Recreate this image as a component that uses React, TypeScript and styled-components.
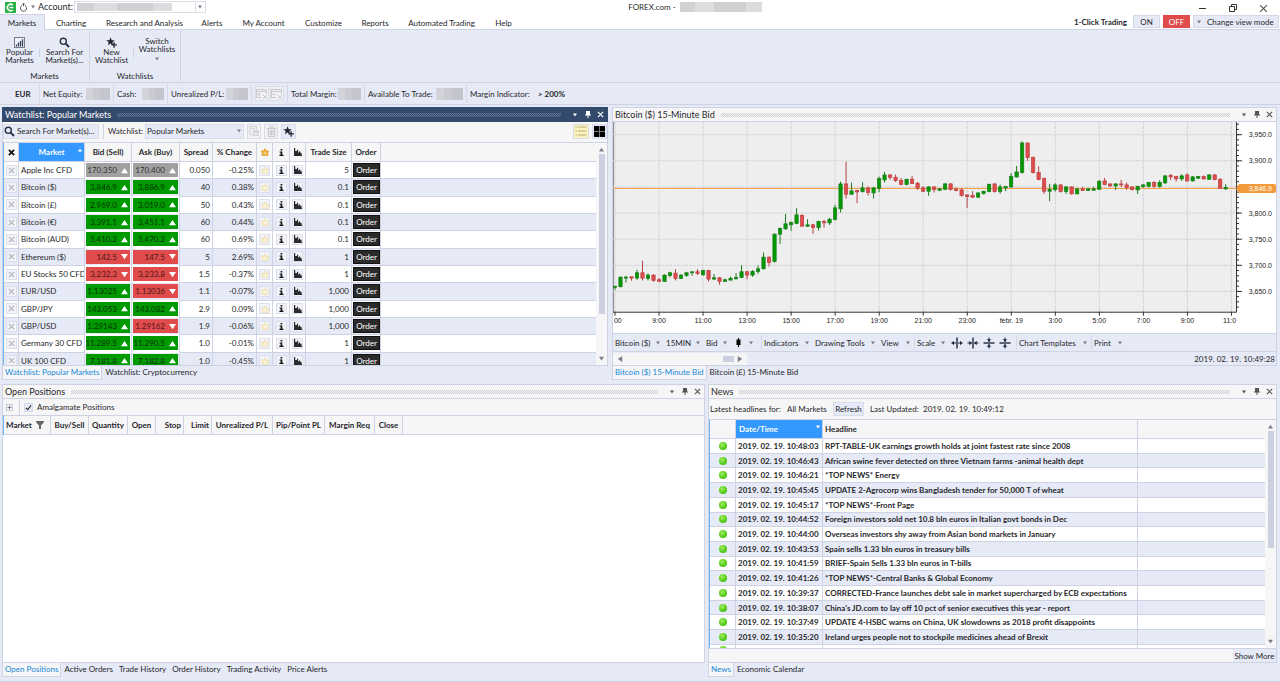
import React from "react";
import styled, { createGlobalStyle, css } from "styled-components";

const c = {
  page: "#e6eaf6",
  line: "#cfd2e2",
  panel: "#f6f6f6",
  ink: "#26272b",
  navy: "#344a6d",
  blue: "#3399ff",
  link: "#1886d9",
  green: "#009a00",
  red: "#e04b4b",
};

const Global = createGlobalStyle`
  *, *::before, *::after { box-sizing: border-box; }
  body { margin: 0; background: ${c.page}; color: ${c.ink}; font: 8px/10px Lato, "Liberation Sans", sans-serif; }
  button, select, input { font: inherit; color: inherit; margin: 0; }
  button { border: 0; padding: 0; background: none; white-space: nowrap; }
  svg { display: block; flex: none; }
`;

const Page = styled.div`
  height: 100vh;
  min-height: 480px;
  display: flex;
  flex-direction: column;
  overflow: hidden;
  white-space: nowrap;
`;

/* ---------- title bar and menu ---------- */
const TitleBar = styled.header`
  display: flex;
  align-items: center;
  height: 14px;
  flex: none;
  background: #fff;
`;
const TitleLeft = styled.div`
  flex: 16 1 0;
  display: flex;
  align-items: center;
  gap: 3px;
  padding-left: 5px;
`;
const TitleText = styled.h1`
  margin: 0;
  font: inherit;
  display: flex;
  align-items: center;
  gap: 4px;
`;
const TitleRight = styled.div`
  flex: 13 1 0;
  display: flex;
  justify-content: flex-end;
  align-items: center;
  gap: 22px;
  padding: 2px 12px 0 0;
`;
const Logo = styled.span`
  display: grid;
  place-items: center;
  width: 11px;
  height: 11px;
  background: #2db34a;
`;
const AccountBox = styled.div`
  display: flex;
  align-items: center;
  gap: 1px;
  font-size: 9px;
`;
const Field = styled.span`
  display: flex;
  align-items: center;
  justify-content: space-between;
  width: 132px;
  height: 12px;
  border: 1px solid #dcdde6;
  padding-left: 2px;
`;
const DropButton = styled.button`
  width: 10px;
  height: 10px;
  display: grid;
  place-items: center;
  border-left: 1px solid #dcdde6;
`;
const Redacted = styled.span<{ $w: number; $h?: number }>`
  width: ${(p) => p.$w}px;
  height: ${(p) => p.$h ?? 12}px;
  flex: none;
  background: linear-gradient(90deg, #d3d3da 0 30%, #c9cad2 30% 60%, #c4c5cd 60%);
`;
const PaleRedacted = styled(Redacted)`
  background: linear-gradient(90deg, #d2d2d4 0 18%, #dddddf 18% 42%, #d0d0d2 42% 80%, #dcdcde 80%);
`;
const MenuBar = styled.nav`
  display: flex;
  height: 16px;
  flex: none;
  background: #fff;
  border-bottom: 1px solid ${c.line};
`;
const MenuTab = styled.button<{ $w: number; $on?: boolean }>`
  width: ${(p) => p.$w}px;
  height: 16px;
  border: 1px solid transparent;
  border-bottom: 0;
  ${(p) => p.$on && css`background: ${c.page}; border-color: ${c.line}; border-left: 0;`}
`;
const ClickTrading = styled.div`
  margin-left: auto;
  display: flex;
  align-items: center;
  gap: 3px;
  padding-right: 1px;
`;
const Bold = styled.span`font-weight: 700;`;
const ClickLabel = styled(Bold)`margin-right: 3px;`;
const Toggle = styled.button<{ $off?: boolean }>`
  width: 27px;
  height: 13px;
  border: 1px solid ${(p) => (p.$off ? c.red : "#d5d8e6")};
  background: ${(p) => (p.$off ? c.red : c.page)};
  color: ${(p) => (p.$off ? "#fff" : c.ink)};
`;
const ViewMode = styled.button`
  display: flex;
  align-items: center;
  gap: 6px;
  width: 86px;
  height: 13px;
  padding-left: 3px;
  border: 1px solid #d5d8e6;
  background: ${c.page};
`;

/* ---------- ribbon ---------- */
const Ribbon = styled.section`
  display: flex;
  height: 53px;
  flex: none;
  border-bottom: 1px solid ${c.line};
`;
const RibbonGroup = styled.div`
  display: flex;
  flex-direction: column;
  justify-content: space-between;
  margin: 1px 0;
  border-right: 1px solid ${c.line};
  text-align: center;
`;
const RibbonItems = styled.div`display: flex;`;
const RibbonButton = styled.button<{ $w: number; $menu?: boolean }>`
  width: ${(p) => p.$w}px;
  height: 38px;
  display: flex;
  flex-direction: column;
  align-items: center;
  padding-top: 6px;
  line-height: 8px;
  gap: ${(p) => (p.$menu ? 4 : 0)}px;
`;
const RibbonRule = styled.span`
  width: 1px;
  height: 10px;
  margin-top: 16px;
  background: ${c.line};
`;

/* ---------- account strip ---------- */
const Strip = styled.section`
  display: flex;
  align-items: center;
  height: 22px;
  flex: none;
  border-bottom: 1px solid ${c.line};
`;
const StripCell = styled.div<{ $w: number }>`
  width: ${(p) => p.$w}px;
  height: 18px;
  display: flex;
  align-items: center;
  justify-content: space-between;
  padding: 0 3px;
  border-right: 1px solid #d5d8e4;
  &:last-child { border-right: 0; }
`;
const StripLead = styled(StripCell)`
  padding: 0 8px 0 15px;
`;
const StripButton = styled.button`
  width: 14px;
  height: 15px;
  display: grid;
  place-items: center;
  border: 1px solid #dcdde2;
  background: #f1f1f3;
`;

/* ---------- workspace and panels ---------- */
const Workspace = styled.main`
  flex: 1;
  min-height: 0;
  display: grid;
  grid-template-rows: minmax(0, 273fr) minmax(0, 293fr);
  gap: 4px;
  padding: 2px 3px 4px 2px;
  border-bottom: 1px solid ${c.line};
`;
const TopRow = styled.div`
  display: grid;
  grid-template-columns: minmax(0, 606fr) minmax(0, 665fr);
  gap: 4px;
`;
const BottomRow = styled.div`
  display: grid;
  grid-template-columns: minmax(0, 703fr) minmax(0, 569fr);
  gap: 3px;
`;
const Panel = styled.section`
  display: flex;
  flex-direction: column;
  min-width: 0;
  min-height: 0;
`;
const Body = styled.div`
  flex: 1;
  min-height: 0;
  display: flex;
  flex-direction: column;
  border: 1px solid ${c.line};
  border-top: 0;
  background: ${c.panel};
`;
const PanelHead = styled.header<{ $dark?: boolean }>`
  display: flex;
  align-items: center;
  gap: 6px;
  height: 15px;
  flex: none;
  padding: 0 3px 0 2px;
  border: 1px solid ${(p) => (p.$dark ? c.navy : c.line)};
  background: ${(p) => (p.$dark ? c.navy : c.panel)};
  color: ${(p) => (p.$dark ? "#fff" : c.ink)};
  --dot: ${(p) => (p.$dark ? "#62779b" : "#cbcbd0")};
`;
const PanelTitle = styled.h2`
  margin: 0;
  font-weight: 400;
  font-size: 9px;
`;
const Grip = styled.span`
  flex: 1;
  height: 4px;
  margin-right: 4px;
  background: repeating-conic-gradient(var(--dot) 0 25%, transparent 0 50%) 0 0 / 2px 2px;
`;
const HeadButton = styled.button`
  width: 7px;
  height: 9px;
  display: grid;
  place-items: center;
`;
const Tools = styled.div<{ $h: number }>`
  display: flex;
  align-items: center;
  gap: 3px;
  height: ${(p) => p.$h}px;
  flex: none;
`;
const WatchTools = styled(Tools)`padding-bottom: 2px;`;
const NewsTools = styled(Tools)`padding-left: 1px;`;
const ToolButton = styled.button<{ $tone?: string }>`
  min-width: 14px;
  height: 15px;
  display: flex;
  align-items: center;
  justify-content: center;
  gap: 2px;
  padding: 0 1px;
  border: 1px solid #d9dcea;
  background: ${(p) => p.$tone ?? c.page};
`;
const SearchButton = styled(ToolButton)`
  width: 96px;
  padding: 0;
  justify-content: flex-start;
`;
const Rule = styled.span`
  width: 1px;
  height: 15px;
  margin: 0 1px;
  background: ${c.line};
`;
const SelectWrap = styled.label`
  display: flex;
  align-items: center;
  gap: 2px;
`;
const Select = styled.select`
  appearance: none;
  width: 99px;
  height: 15px;
  padding: 0 1px;
  border: 1px solid #d9dcea;
  border-radius: 0;
  background: ${c.page};
`;
const SelectBox = styled.span`
  display: grid;
  grid-template-columns: 1fr;
  align-items: center;
  & > * { grid-area: 1 / 1; }
  & > svg { justify-self: end; margin-right: 3px; pointer-events: none; }
`;
const Spacer = styled.span`flex: 1;`;
const View = styled.div`
  flex: 1;
  min-height: 0;
  display: flex;
  border-top: 1px solid ${c.line};
  border-left: 1px solid #6bb4fb;
`;
const Scroller = styled.div`
  flex: 1;
  min-width: 0;
  overflow: hidden;
`;
const ScrollBar = styled.div`
  width: 11px;
  flex: none;
  display: flex;
  flex-direction: column;
  align-items: center;
  gap: 2px;
  padding: 4px 0;
  background: ${c.panel};
`;
const ThumbTrack = styled.div`flex: 1; min-height: 0;`;
const Thumb = styled.div<{ $pct: number }>`
  width: 6px;
  height: ${(p) => p.$pct}%;
  background: #cdd0e0;
`;
const Tabs = styled.nav`
  display: flex;
  height: 14px;
  flex: none;
`;
const Tab = styled.button<{ $on?: boolean }>`
  padding: 0 2px 1px;
  border: 1px solid transparent;
  border-top: 0;
  ${(p) => p.$on && css`color: ${c.link}; background: ${c.panel}; border-color: ${c.line};`}
`;

/* ---------- tables ---------- */
const Table = styled.table<{ $h?: number }>`
  width: 100%;
  height: ${(p) => (p.$h ? p.$h + "px" : "auto")};
  table-layout: fixed;
  border-collapse: separate;
  border-spacing: 0;
  th, td { padding: 0 2px; border-right: 1px solid ${c.line}; border-bottom: 1px solid ${c.line}; overflow: hidden; }
  th { height: 19px; font-weight: 700; background: ${c.panel}; }
  th:last-child, td:last-child { border-right: 0; }
  tbody tr { background: #fff; }
  tbody tr:nth-child(even) { background: ${c.page}; }
`;
const Th = styled.th<{ $align?: string }>`
  text-align: ${(p) => p.$align ?? "center"};
`;
const SortTh = styled.th`
  && { background: ${c.blue}; color: #fff; }
  & > div { display: flex; justify-content: center; align-items: center; position: relative; }
  & svg { position: absolute; right: 0; top: 1px; }
`;
const SortDateTh = styled(SortTh)`
  & > div { justify-content: flex-start; padding-left: 1px; }
`;
const Td = styled.td<{ $align?: string }>`
  text-align: ${(p) => p.$align ?? "left"};
`;
const PriceTd = styled.td`
  && { padding: 1px 1px; border-bottom-color: #fff; }
`;
const Price = styled.button<{ $tone: string }>`
  display: flex;
  align-items: center;
  justify-content: flex-end;
  gap: 4px;
  width: 100%;
  height: 14px;
  padding-right: 2px;
  background: ${(p) => p.$tone};
  color: rgba(0, 0, 0, 0.72);
`;
const IconTd = styled.td`
  && { padding: 0; }
`;
const Mini = styled.button`
  display: grid;
  place-items: center;
  width: 11px;
  height: 11px;
  margin: 0 auto;
  border: 1px solid #dcdfee;
  background: #f3f4fa;
`;
const IconHead = styled.span`
  display: grid;
  place-items: center;
`;
const Order = styled.button`
  display: block;
  width: 27px;
  height: 14px;
  background: #2b2b2b;
  border: 1px solid #111;
  color: #fff;
`;
const OrderTd = styled.td`
  && { padding: 0 1px; }
`;

/* ---------- chart ---------- */
const ChartArea = styled.div`
  flex: 1;
  min-height: 0;
  background: #fff;
  & > svg { width: 100%; height: 100%; }
`;
const ChartTools = styled.div`
  display: flex;
  align-items: center;
  height: 19px;
  flex: none;
  border-top: 1px solid ${c.line};
  border-bottom: 1px solid ${c.line};
  background: ${c.page};
`;
const ChartTool = styled.button<{ $w: number; $line?: boolean; $icon?: boolean }>`
  width: ${(p) => p.$w}px;
  height: 15px;
  display: flex;
  align-items: center;
  justify-content: space-between;
  padding: ${(p) => (p.$icon ? "0 8px 0 5px" : "0 4px 0 2px")};
  ${(p) => p.$line && css`border-right: 1px solid #d5d9e8;`}
`;
const ZoomTools = styled.span`
  display: flex;
  padding-right: 3px;
  border-right: 1px solid #d5d9e8;
`;
const ZoomTool = styled.button`
  width: 16px;
  height: 15px;
  display: grid;
  place-items: center;
`;
const ChartFoot = styled.div`
  display: flex;
  align-items: center;
  justify-content: space-between;
  height: 13px;
  flex: none;
  padding-right: 1px;
  background: ${c.page};
`;
const HScroll = styled.div`
  display: flex;
  align-items: center;
  justify-content: space-between;
  width: 134px;
  height: 12px;
  padding: 0 4px;
  background: ${c.panel};
`;
const HThumb = styled.span`
  width: 11px;
  height: 6px;
  margin: 0 3px 0 auto;
  background: #cdd0e0;
`;

/* ---------- lower panels ---------- */
const CheckLabel = styled.label`
  display: flex;
  align-items: center;
  gap: 4px;
`;
const Check = styled.input`
  appearance: none;
  width: 9px;
  height: 9px;
  background: ${c.page};
  border: 1px solid #d5d9ea;
  display: grid;
  place-items: center;
  &:checked::after {
    content: "";
    width: 3px;
    height: 6px;
    border: solid #222;
    border-width: 0 1px 1px 0;
    transform: rotate(40deg);
  }
`;
const Expand = styled.button`
  width: 7px;
  height: 7px;
  margin: 0 2px 0 3px;
  display: grid;
  place-items: center;
  border: 1px solid #c9cbd6;
`;
const Blank = styled.div`flex: 1; background: #fff;`;
const HeadOnly = styled.div`border-top: 1px solid ${c.line}; border-left: 1px solid #6bb4fb;`;
const NewsInfo = styled.span<{ $w: number }>`
  width: ${(p) => p.$w}px;
`;
const RefreshButton = styled(ToolButton)`width: 31px; height: 14px; margin-right: 3px;`;
const NewsTable = styled(Table)`font-weight: 700;`;
const Dot = styled.span`
  display: block;
  width: 8px;
  height: 8px;
  margin: 0 auto;
  border-radius: 50%;
  background: radial-gradient(circle at 40% 35%, #a4ee5c, #55cc1d 55%, #35a50e);
`;
const NewsFoot = styled.div`
  display: flex;
  justify-content: flex-end;
  height: 14px;
  flex: none;
  border-top: 1px solid ${c.line};
`;
const ShowMore = styled.button`
  width: 43px;
  background: ${c.page};
`;

/* ---------- icons ---------- */
const Tri = ({ dir = "down", s = 4, fill = "#7c7e88" }: { dir?: string; s?: number; fill?: string }) => {
  const d: Record<string, string> = {
    down: "M0 1H8L4 7Z",
    up: "M0 7H8L4 1Z",
    left: "M7 0V8L1 4Z",
    right: "M1 0V8L7 4Z",
  };
  return (
    <svg width={s} height={s} viewBox="0 0 8 8" aria-hidden="true">
      <path d={d[dir]} fill={fill} />
    </svg>
  );
};
const Magnifier = ({ s = 11 }) => (
  <svg width={s} height={s} viewBox="0 0 12 12" fill="none" stroke="#2a3042">
    <circle cx="4.7" cy="4.7" r="3.3" strokeWidth="1.5" />
    <path d="M7.2 7.2L11 11" strokeWidth="2.2" />
  </svg>
);
const StarPlus = ({ s = 11 }) => (
  <svg width={s} height={s} viewBox="0 0 12 12">
    <path d="M5 .3L6.2 3.6H9.6L7 5.7 7.9 9 5 7 2 9.1 3 5.7.3 3.6H3.8Z" fill="#20242f" />
    <path d="M8.8 5.6V11.6M5.8 8.6H11.8" stroke="#20242f" strokeWidth="1.4" />
  </svg>
);
const PopularIcon = () => (
  <svg width="11" height="11" viewBox="0 0 11 11">
    <rect x=".5" y=".5" width="10" height="10" fill="#f0f2fa" stroke="#767b8d" />
    <path d="M2.5 9.5V7.5M4.5 9.5V5.5M6.5 9.5V4M8.5 9.5V2.3" stroke="#3b4258" strokeWidth="1.3" />
  </svg>
);
const Power = () => (
  <svg width="9" height="9" viewBox="0 0 10 10" fill="none" stroke="#444">
    <path d="M3.2 2.8A3.4 3.4 0 1 0 6.8 2.8M5 .4V3.5M3.6 1.2H6.4" />
  </svg>
);
const GridX = ({ plus }: { plus?: boolean }) => (
  <svg width="12" height="12" viewBox="0 0 12 12" fill="none" stroke="#c9cad0">
    <path d="M.5 1.5H10.5V6M.5 1.5V9.5H5M.5 3.5H10.5M1.5 6.5H4.5M7 7L11 11M11 7L7 11" />
    {plus && <path d="M3 5V8" />}
  </svg>
);
const Save = () => (
  <svg width="10" height="10" viewBox="0 0 12 12" fill="none" stroke="#c4c5cb">
    <path d="M1 .5V10.5H4M1 .5H9V4M3 3H7M5.5 5.5H11V11.5H5.5ZM7 5.5V8H10V5.5" />
  </svg>
);
const Trash = () => (
  <svg width="9" height="11" viewBox="0 0 10 12" fill="none" stroke="#bfc0c6">
    <path d="M0 2.5H10M3.5 2.5V.5H6.5V2.5M1.5 3V11.5H8.5V3M3.5 4.5V10M5 4.5V10M6.5 4.5V10" />
  </svg>
);
const ListIcon = () => (
  <svg width="12" height="12" viewBox="0 0 12 12" stroke="#b3ad7a" strokeWidth="1.2">
    <path d="M.5 2H2M3 2H11.5M.5 6H2M3 6H11.5M.5 10H2M3 10H11.5" />
  </svg>
);
const Tiles = () => (
  <svg width="11" height="11" viewBox="0 0 11 11">
    <path d="M0 0H11V11H0Z" fill="#000" />
    <path d="M5.5 0V11M0 5.5H11" stroke="#777" />
  </svg>
);
const StarIcon = ({ fill = "#f6ecc9", s = 8, stroke = "#e9dcae" }) => (
  <svg width={s} height={s} viewBox="0 0 10 10">
    <path d="M5 .6L6.5 3.4 9.6 3.8 8.6 6V9.4H1.4V6L.4 3.8 3.5 3.4Z" fill={fill} stroke={stroke} strokeWidth=".8" />
    <path d="M3.5 6.5H6.5" stroke="#fff" />
  </svg>
);
const InfoIcon = () => (
  <svg width="5" height="7" viewBox="0 0 5 7">
    <path d="M1.6 0H3.3V1.5H1.6ZM.6 2.5H3.3V5.8H4.5V7H.4V5.8H1.6V3.6H.6Z" fill="#111" />
  </svg>
);
const BarIcon = () => (
  <svg width="8" height="8" viewBox="0 0 8 8">
    <path d="M0 0H1.2V6.8H8V8H0ZM1.2 3H3V1.8H4.2V4.5H5V3.5H6.2V4.8H7.5V7H1.2Z" fill="#2a2a2e" />
  </svg>
);
const Cross = ({ s = 7, stroke = "#555", w = 1 }) => (
  <svg width={s} height={s} viewBox="0 0 8 8" stroke={stroke} strokeWidth={w}>
    <path d="M1 1L7 7M7 1L1 7" />
  </svg>
);
const Pin = ({ fill = "#555" }) => (
  <svg width="6" height="7" viewBox="0 0 6 7">
    <path d="M1 0H5V3.5H6V4.5H3.5V7H2.5V4.5H0V3.5H1Z" fill={fill} />
  </svg>
);
const Funnel = () => (
  <svg width="8" height="8" viewBox="0 0 8 8">
    <path d="M0 0H8V1L5 4.5V8H3V4.5L0 1Z" fill="#666" />
  </svg>
);
const PlusMark = () => (
  <svg width="5" height="5" viewBox="0 0 5 5">
    <path d="M2.5 .5V4.5M.5 2.5H4.5" stroke="#777b8a" />
  </svg>
);
const CandleIcon = () => (
  <svg width="5" height="9" viewBox="0 0 5 9">
    <path d="M2 0H3V1.5H4.5V7H3V9H2V7H.5V1.5H2Z" fill="#000" />
  </svg>
);
const SpreadIcon = ({ out, flat }: { out: boolean; flat: boolean }) => (
  <svg width="12" height="12" viewBox="0 0 12 12">
    <g transform={flat ? "rotate(90 6 6)" : undefined}>
      <path d="M6 .5V11.5" stroke="#222838" strokeWidth="1.4" />
      <path d="M.5 6H5M7 6H11.5" stroke="#222838" />
      {out ? (
        <path d="M.5 6L3 3.8V8.2ZM11.5 6L9 3.8V8.2Z" fill="#222838" />
      ) : (
        <path d="M4.8 6L2.3 3.8V8.2ZM7.2 6L9.7 3.8V8.2Z" fill="#222838" />
      )}
    </g>
  </svg>
);

/* ---------- data ---------- */
const menu: [string, number][] = [
  ["Markets", 45], ["Charting", 52], ["Research and Analysis", 95], ["Alerts", 40], ["My Account", 63],
  ["Customize", 57], ["Reports", 46], ["Automated Trading", 87], ["Help", 37],
];

const N = "n", U = "u", D = "d";
const quotes: [string, string, string, string, string, string, string, string][] = [
  ["Apple Inc CFD", "170.350", N, "170.400", N, "0.050", "-0.25%", "5"],
  ["Bitcoin ($)", "3,846.9", U, "3,886.9", U, "40", "0.38%", "0.1"],
  ["Bitcoin (£)", "2,969.0", U, "3,019.0", U, "50", "0.43%", "0.1"],
  ["Bitcoin (€)", "3,391.1", U, "3,451.1", U, "60", "0.44%", "0.1"],
  ["Bitcoin (AUD)", "5,410.2", U, "5,470.2", U, "60", "0.69%", "0.1"],
  ["Ethereum ($)", "142.5", D, "147.5", D, "5", "2.69%", "1"],
  ["EU Stocks 50 CFD", "3,232.3", D, "3,233.8", D, "1.5", "-0.37%", "1"],
  ["EUR/USD", "1.13025", U, "1.13036", D, "1.1", "-0.07%", "1,000"],
  ["GBP/JPY", "143.053", U, "143.082", U, "2.9", "0.09%", "1,000"],
  ["GBP/USD", "1.29143", U, "1.29162", D, "1.9", "-0.06%", "1,000"],
  ["Germany 30 CFD", "11,289.5", U, "11,290.5", U, "1.0", "-0.01%", "1"],
  ["UK 100 CFD", "7,181.8", U, "7,182.8", U, "1.0", "-0.45%", "1"],
];
const tone: Record<string, string> = { n: "#a0a0a0", u: c.green, d: c.red };

const news: [string, string][] = [
  ["10:48:03", "RPT-TABLE-UK earnings growth holds at joint fastest rate since 2008"],
  ["10:46:43", "African swine fever detected on three Vietnam farms -animal health dept"],
  ["10:46:21", "*TOP NEWS* Energy"],
  ["10:45:45", "UPDATE 2-Agrocorp wins Bangladesh tender for 50,000 T of wheat"],
  ["10:45:17", "*TOP NEWS*-Front Page"],
  ["10:44:52", "Foreign investors sold net 10.8 bln euros in Italian govt bonds in Dec"],
  ["10:44:00", "Overseas investors shy away from Asian bond markets in January"],
  ["10:43:53", "Spain sells 1.33 bln euros in treasury bills"],
  ["10:41:59", "BRIEF-Spain Sells 1.33 bln euros in T-bills"],
  ["10:41:26", "*TOP NEWS*-Central Banks & Global Economy"],
  ["10:39:37", "CORRECTED-France launches debt sale in market supercharged by ECB expectations"],
  ["10:38:07", "China's JD.com to lay off 10 pct of senior executives this year - report"],
  ["10:37:49", "UPDATE 4-HSBC warns on China, UK slowdowns as 2018 profit disappoints"],
  ["10:35:20", "Ireland urges people not to stockpile medicines ahead of Brexit"],
];

const positionCols: [string, number, string?][] = [
  ["Market", 47], ["Buy/Sell", 38], ["Quantity", 39], ["Open", 28], ["Stop", 28, "right"], ["Limit", 28, "right"],
  ["Unrealized P/L", 61], ["Pip/Point PL", 52], ["Margin Req", 50], ["Close", 28],
];

/* One candle per 15 minutes: direction, body top, body bottom, high, low. */
const candleText = `g547,551,547,558 g520,549,518,551 g520,523,516,536 r519,523,519,531 g507,523,498,528 r507,523,471,530
g514,524,509,530 r514,530,512,534 r528,533,523,533 g514,533,512,533 g507,515,504,521 r508,524,496,530
g514,524,511,526 g507,515,504,519 g504,507,503,516 r504,509,496,514 g500,513,498,516 r500,526,498,533
g522,526,511,528 r522,533,520,543 g528,533,525,534 g524,529,518,530 g521,525,508,528 g504,521,484,523
r504,514,501,526 g503,514,499,519 g495,503,485,510 g460,495,446,497 r460,476,458,488 g391,473,389,476
g374,391,371,420 g360,375,330,378 g356,363,353,381 g333,359,313,361 r335,367,331,369 g363,367,346,369
r363,371,360,390 g353,371,350,380 r353,357,348,371 g346,357,342,363 g312,347,303,350 g240,315,233,326
r240,271,174,284 g261,271,236,273 r260,264,258,298 g252,263,235,266 r252,266,248,275 g252,267,249,284
g224,253,218,265 g213,228,204,236 r213,221,211,228 r220,230,212,234 r229,242,222,244 g226,242,225,244
r226,239,216,240 r238,252,234,258 r252,262,247,264 g249,262,247,276 r249,257,248,266 g255,259,252,261
g240,256,237,259 r240,257,237,260 r255,260,251,262 r258,275,253,278 r273,278,272,312 r275,280,262,281
g267,280,266,281 g262,269,261,272 g241,263,240,265 r240,263,238,266 g249,263,242,270 g248,252,246,262
g218,249,208,252 g204,219,186,221 g117,206,112,209 r117,161,116,171 r160,206,158,209 r206,227,187,229
r224,262,221,270 g257,262,240,292 g243,257,238,263 r243,263,241,266 g249,263,247,270 r249,270,248,272
g255,270,252,271 r255,260,249,261 g255,260,252,261 g255,259,249,260 g232,256,229,257 r231,242,222,244
r240,246,239,249 g240,246,238,258 r240,243,228,249 r243,251,236,258 r249,257,248,260 g247,258,246,270
g243,248,241,252 g236,247,234,250 r236,247,232,252 g236,248,229,251 g216,237,213,240 r215,219,210,228
r218,225,216,233 g216,225,211,231 r213,231,208,233 g219,231,216,233 g218,223,216,225 r218,225,215,227
g213,226,211,228 r213,227,211,229 r226,253,223,254 g251,255,241,258`;
const candles = candleText.split(/\s+/).map((t) => ({ up: t[0] === "g", v: t.slice(1).split(",").map(Number) }));

const hours = ["00", "9:00", "11:00", "13:00", "15:00", "17:00", "19:00", "21:00", "23:00", "febr. 19", "3:00", "5:00", "7:00", "9:00", "11:0"];
const prices = ["3,950.0", "3,900.0", "", "3,800.0", "3,750.0", "3,700.0", "3,650.0"];
const hourX = (i: number) => 2 + i * 44.1;
const priceY = (i: number) => 12.7 + i * 26.17;

function Chart() {
  return (
    <svg viewBox="0 0 664 210" preserveAspectRatio="xMinYMin meet" role="img" aria-label="Bitcoin 15 minute candles">
      <rect width="624" height="190" fill="#eeeeef" />
      <rect width="1" height="190" fill="#8e9096" />
      <g stroke="#d3d3d5" strokeDasharray="3 1">
        {hours.map((_, i) => <path key={i} d={`M${hourX(i)} 0V190`} />)}
        {prices.map((_, i) => <path key={i} d={`M0 ${priceY(i)}H624`} />)}
      </g>
      <path d="M0 66.5H624" stroke="#f39a3c" />
      <g transform="translate(-3 -18) scale(0.33333)">
        {candles.map(({ up, v }, i) => {
          const x = 15 + i * 16.53;
          return (
            <g key={i} fill={up ? "#009a00" : "#e04b4b"} stroke={up ? "#1c7a1c" : "#b84040"}>
              <path d={`M${x} ${v[2]}V${v[3]}`} strokeWidth="3" />
              <rect x={x - 5} y={v[0]} width="10" height={Math.max(v[1] - v[0], 2)} strokeWidth="2" />
            </g>
          );
        })}
      </g>
      <path d="M0 190.5H624.5V0" fill="none" stroke="#333" />
      <g stroke="#333">
        {hours.map((_, i) => <path key={i} d={`M${hourX(i)} 190V194`} />)}
        {prices.map((_, i) => <path key={i} d={`M624 ${priceY(i)}H630`} />)}
        {Array.from({ length: 36 }, (_, i) => <path key={i} d={`M624 ${2.2 + i * 5.234}H627`} />)}
      </g>
      <g fontFamily="Liberation Sans, sans-serif" fontSize="7" fill="#222">
        {hours.map((h, i) => (
          <text key={i} x={i === 0 ? 1 : i === 14 ? 611 : hourX(i)} y="201" textAnchor={i === 0 || i === 14 ? "start" : "middle"}>{h}</text>
        ))}
        {prices.map((p, i) => p && <text key={p} x="660" y={priceY(i) + 2.5} textAnchor="end">{p}</text>)}
        <path d="M624 66.5L627 62H662Q664 62 664 64V69Q664 71 662 71H627Z" fill="#f39a3c" />
        <text x="660" y="69" textAnchor="end" fill="#fff">3,846.9</text>
      </g>
    </svg>
  );
}

function Head({ title, dark }: { title: string; dark?: boolean }) {
  const ink = dark ? "#fff" : "#555";
  return (
    <PanelHead $dark={dark}>
      <PanelTitle>{title}</PanelTitle>
      <Grip />
      <HeadButton aria-label="Panel menu"><Tri fill={ink} /></HeadButton>
      <HeadButton aria-label="Pin panel"><Pin fill={ink} /></HeadButton>
      <HeadButton aria-label="Close panel"><Cross stroke={ink} w={1.3} /></HeadButton>
    </PanelHead>
  );
}

function VScroll({ pct }: { pct: number }) {
  return (
    <ScrollBar>
      <Tri dir="up" s={5} />
      <ThumbTrack><Thumb $pct={pct} /></ThumbTrack>
      <Tri s={5} />
    </ScrollBar>
  );
}

function Watchlist() {
  return (
    <Panel>
      <Head title="Watchlist: Popular Markets" dark />
      <Body>
        <WatchTools $h={20}>
          <SearchButton><Magnifier />Search For Market(s)...</SearchButton>
          <Rule />
          <SelectWrap>
            Watchlist:
            <SelectBox>
              <Select defaultValue="Popular Markets"><option>Popular Markets</option><option>Cryptocurrency</option></Select>
              <Tri />
            </SelectBox>
          </SelectWrap>
          <ToolButton $tone="#f1f1f4" aria-label="Save"><Save /></ToolButton>
          <ToolButton $tone="#f1f1f4" aria-label="Delete"><Trash /></ToolButton>
          <ToolButton aria-label="New watchlist"><StarPlus /></ToolButton>
          <Spacer />
          <ToolButton $tone="#fbf3bd" aria-label="List view"><ListIcon /></ToolButton>
          <ToolButton aria-label="Tile view"><Tiles /></ToolButton>
        </WatchTools>
        <View>
          <Scroller>
            <Table $h={227}>
              <colgroup>
                {[15, 66, 47, 48, 33, 44, 16, 17, 16, 46, 29].map((w, i) => <col key={i} style={{ width: w }} />)}
                <col />
              </colgroup>
              <thead>
                <tr>
                  <th><IconHead><Cross w={2} stroke="#111" /></IconHead></th>
                  <SortTh><div>Market<Tri dir="up" fill="#fff" /></div></SortTh>
                  <Th>Bid (Sell)</Th>
                  <Th>Ask (Buy)</Th>
                  <Th>Spread</Th>
                  <Th>% Change</Th>
                  <th><IconHead><StarIcon fill="#f2b23c" stroke="#d9952a" /></IconHead></th>
                  <th><IconHead><InfoIcon /></IconHead></th>
                  <th><IconHead><BarIcon /></IconHead></th>
                  <Th>Trade Size</Th>
                  <Th>Order</Th>
                  <th />
                </tr>
              </thead>
              <tbody>
                {quotes.map(([name, bid, bd, ask, ad, spread, change, size]) => (
                  <tr key={name}>
                    <IconTd><Mini aria-label={"Remove " + name}><Cross stroke="#b5b6bd" w={1.5} /></Mini></IconTd>
                    <Td>{name}</Td>
                    <PriceTd><Price $tone={tone[bd]}>{bid}<Tri s={7} dir={bd === D ? "down" : "up"} fill="#fff" /></Price></PriceTd>
                    <PriceTd><Price $tone={tone[ad]}>{ask}<Tri s={7} dir={ad === D ? "down" : "up"} fill="#fff" /></Price></PriceTd>
                    <Td $align="right">{spread}</Td>
                    <Td $align="right">{change}</Td>
                    <IconTd><Mini aria-label="Favourite"><StarIcon /></Mini></IconTd>
                    <IconTd><Mini aria-label="Information"><InfoIcon /></Mini></IconTd>
                    <IconTd><Mini aria-label="Chart"><BarIcon /></Mini></IconTd>
                    <Td $align="right">{size}</Td>
                    <OrderTd><Order>Order</Order></OrderTd>
                    <td />
                  </tr>
                ))}
              </tbody>
            </Table>
          </Scroller>
          <VScroll pct={80} />
        </View>
      </Body>
      <Tabs><Tab $on>Watchlist: Popular Markets</Tab><Tab>Watchlist: Cryptocurrency</Tab></Tabs>
    </Panel>
  );
}

function ChartPanel() {
  return (
    <Panel>
      <Head title="Bitcoin ($) 15-Minute Bid" />
      <Body>
        <ChartArea><Chart /></ChartArea>
        <ChartTools>
          <ChartTool $w={51}>Bitcoin ($)<Tri /></ChartTool>
          <ChartTool $w={40}>15MIN<Tri /></ChartTool>
          <ChartTool $w={27}>Bid<Tri /></ChartTool>
          <ChartTool $w={31} $line $icon aria-label="Chart type"><CandleIcon /><Tri /></ChartTool>
          <ChartTool $w={51}>Indicators<Tri /></ChartTool>
          <ChartTool $w={66}>Drawing Tools<Tri /></ChartTool>
          <ChartTool $w={36} $line>View<Tri /></ChartTool>
          <ChartTool $w={34}>Scale<Tri /></ChartTool>
          <ZoomTools>
            <ZoomTool aria-label="Widen bars"><SpreadIcon out flat={false} /></ZoomTool>
            <ZoomTool aria-label="Narrow bars"><SpreadIcon out={false} flat={false} /></ZoomTool>
            <ZoomTool aria-label="Compress prices"><SpreadIcon out={false} flat /></ZoomTool>
            <ZoomTool aria-label="Stretch prices"><SpreadIcon out={false} flat /></ZoomTool>
          </ZoomTools>
          <ChartTool $w={75} $line>Chart Templates<Tri /></ChartTool>
          <ChartTool $w={34}>Print<Tri /></ChartTool>
        </ChartTools>
        <ChartFoot>
          <HScroll><Tri dir="left" s={6} /><HThumb /><Tri dir="right" s={6} /></HScroll>
          <span>2019. 02. 19. 10:49:28</span>
        </ChartFoot>
      </Body>
      <Tabs><Tab $on>Bitcoin ($) 15-Minute Bid</Tab><Tab>Bitcoin (£) 15-Minute Bid</Tab></Tabs>
    </Panel>
  );
}

function Positions() {
  return (
    <Panel>
      <Head title="Open Positions" />
      <Body>
        <Tools $h={16}>
          <Expand aria-label="Expand all"><PlusMark /></Expand>
          <Rule />
          <CheckLabel><Check type="checkbox" defaultChecked />Amalgamate Positions</CheckLabel>
        </Tools>
        <HeadOnly>
          <Table>
            <colgroup>
              {positionCols.map(([n, w]) => <col key={n} style={{ width: w }} />)}
              <col />
            </colgroup>
            <thead>
              <tr>
                {positionCols.map(([n, , align], i) => (
                  <Th key={n} $align={align}>{i ? n : <CheckLabel as="span">{n}<Funnel /></CheckLabel>}</Th>
                ))}
                <th />
              </tr>
            </thead>
          </Table>
        </HeadOnly>
        <Blank />
      </Body>
      <Tabs>
        {["Open Positions", "Active Orders", "Trade History", "Order History", "Trading Activity", "Price Alerts"].map((t, i) => (
          <Tab key={t} $on={i === 0}>{t}</Tab>
        ))}
      </Tabs>
    </Panel>
  );
}

function News() {
  return (
    <Panel>
      <Head title="News" />
      <Body>
        <NewsTools $h={20}>
          <NewsInfo $w={74}>Latest headlines for:</NewsInfo>
          <NewsInfo $w={43}>All Markets</NewsInfo>
          <RefreshButton>Refresh</RefreshButton>
          <NewsInfo $w={50}>Last Updated:</NewsInfo>
          <span>2019. 02. 19. 10:49:12</span>
        </NewsTools>
        <View>
          <Scroller>
            <NewsTable $h={237}>
              <colgroup>
                <col style={{ width: 26 }} /><col style={{ width: 87 }} /><col style={{ width: 315 }} /><col />
              </colgroup>
              <thead>
                <tr>
                  <th />
                  <SortDateTh><div>Date/Time<Tri fill="#fff" /></div></SortDateTh>
                  <Th $align="left">Headline</Th>
                  <th />
                </tr>
              </thead>
              <tbody>
                {news.map(([t, h]) => (
                  <tr key={t}><td><Dot /></td><Td>2019. 02. 19. {t}</Td><Td>{h}</Td><td /></tr>
                ))}
                <tr><td><Dot /></td><td /><td /><td /></tr>
              </tbody>
            </NewsTable>
          </Scroller>
          <VScroll pct={57} />
        </View>
        <NewsFoot><ShowMore>Show More</ShowMore></NewsFoot>
      </Body>
      <Tabs><Tab $on>News</Tab><Tab>Economic Calendar</Tab></Tabs>
    </Panel>
  );
}

export default function App() {
  return (
    <>
      <Global />
      <Page>
        <TitleBar>
          <TitleLeft>
            <Logo>
              <svg width="9" height="9" viewBox="0 0 10 10" fill="none" stroke="#fff" strokeWidth="1.7">
                <path d="M7.5 2.2A3.6 3.6 0 1 0 7.5 7.8M4 5H8" />
              </svg>
            </Logo>
            <Power />
            <Tri />
            <AccountBox>
              Account:
              <Field><PaleRedacted $w={95} $h={8} /><DropButton aria-label="Choose account"><Tri /></DropButton></Field>
            </AccountBox>
          </TitleLeft>
          <TitleText>FOREX.com - <PaleRedacted $w={82} $h={10} /></TitleText>
          <TitleRight>
            <button aria-label="Minimise"><svg width="8" height="8" viewBox="0 0 8 8"><path d="M0 4.5H7" stroke="#333" /></svg></button>
            <button aria-label="Restore"><svg width="8" height="8" viewBox="0 0 8 8" fill="none" stroke="#333"><path d="M.5 2.5H5.5V7.5H.5ZM2.5 2.5V.5H7.5V5.5H5.5" /></svg></button>
            <button aria-label="Close"><Cross s={9} /></button>
          </TitleRight>
        </TitleBar>
        <MenuBar>
          {menu.map(([m, w], i) => <MenuTab key={m} $w={w} $on={i === 0}>{m}</MenuTab>)}
          <ClickTrading>
            <ClickLabel>1-Click Trading</ClickLabel>
            <Toggle>ON</Toggle>
            <Toggle $off>OFF</Toggle>
            <ViewMode><Tri />Change view mode</ViewMode>
          </ClickTrading>
        </MenuBar>
        <Ribbon>
          <RibbonGroup>
            <RibbonItems>
              <RibbonButton $w={39}><PopularIcon /><span>Popular<br />Markets</span></RibbonButton>
              <RibbonRule />
              <RibbonButton $w={49}><Magnifier /><span>Search For<br />Market(s)...</span></RibbonButton>
            </RibbonItems>
            <span>Markets</span>
          </RibbonGroup>
          <RibbonGroup>
            <RibbonItems>
              <RibbonButton $w={43}><StarPlus /><span>New<br />Watchlist</span></RibbonButton>
              <RibbonRule />
              <RibbonButton $w={46} $menu><span>Switch<br />Watchlists</span><Tri /></RibbonButton>
            </RibbonItems>
            <span>Watchlists</span>
          </RibbonGroup>
        </Ribbon>
        <Strip>
          <StripLead $w={40}><Bold>EUR</Bold></StripLead>
          <StripCell $w={74}>Net Equity:<Redacted $w={24} /></StripCell>
          <StripCell $w={54}>Cash:<Redacted $w={22} /></StripCell>
          <StripCell $w={84}>Unrealized P/L:<Redacted $w={22} /></StripCell>
          <StripCell $w={36}><StripButton aria-label="Close all"><GridX plus /></StripButton><StripButton aria-label="Close selected"><GridX /></StripButton></StripCell>
          <StripCell $w={77}>Total Margin:<Redacted $w={23} /></StripCell>
          <StripCell $w={102}>Available To Trade:<Redacted $w={27} /></StripCell>
          <StripCell $w={101}>Margin Indicator:<Bold>&gt; 200%</Bold></StripCell>
        </Strip>
        <Workspace>
          <TopRow><Watchlist /><ChartPanel /></TopRow>
          <BottomRow><Positions /><News /></BottomRow>
        </Workspace>
      </Page>
    </>
  );
}
